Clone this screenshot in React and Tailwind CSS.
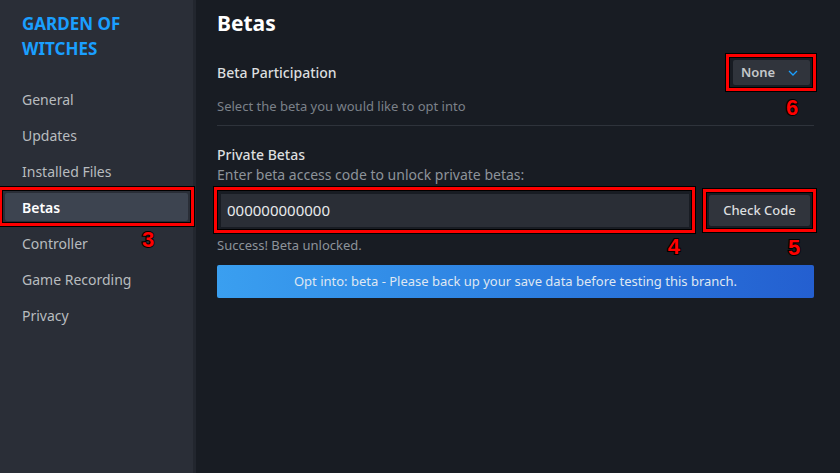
import React from 'react';

const navItems = ['General', 'Updates', 'Installed Files', 'Betas', 'Controller', 'Game Recording', 'Privacy'];

function Mark({ className }) {
  // red annotation frame with thin black outline inside and out
  return (
    <div
      className={`pointer-events-none absolute border-[3px] border-[#ff0000] shadow-[0_0_0_1px_#000,inset_0_0_0_1px_#000] ${className}`}
    />
  );
}

function Num({ children, className }) {
  return (
    <span
      className={`pointer-events-none absolute text-[22px] font-bold leading-none text-[#ff0000] [-webkit-text-stroke:2px_#000] [paint-order:stroke_fill] ${className}`}
      style={{ fontFamily: '"Liberation Sans", Arial, sans-serif' }}
    >
      {children}
    </span>
  );
}

export default function App() {
  return (
    <div
      className="flex h-[473px] w-[840px] overflow-hidden bg-[#181c23] text-[#dcdedf]"
      style={{ fontFamily: '"Noto Sans", "Open Sans", Arial, sans-serif' }}
    >
      {/* Sidebar */}
      <aside className="relative w-[196px] shrink-0 border-r-[3px] border-[#22262e] bg-[#2a2e37]">
        <h2 className="px-[22px] pt-[11px] text-[17px] font-bold leading-[25px] text-[#1a9fff]">
          GARDEN OF<br />WITCHES
        </h2>
        <nav className="mt-[20px] flex flex-col">
          {navItems.map((item) =>
            item === 'Betas' ? (
              <div key={item} className="relative mx-[5px] my-[4px] flex h-[28px] items-center rounded-[2px] bg-[#3d4450] px-[17px] text-[14px] font-semibold text-white">
                {item}
                <Mark className="-left-[6px] -right-[6px] -top-[6px] -bottom-[5px]" />
              </div>
            ) : (
              <div key={item} className="flex h-[36px] items-center px-[22px] text-[14px] text-[#b8bcbf]">
                {item}
              </div>
            )
          )}
        </nav>
        <Num className="left-[142px] top-[229px]">3</Num>
      </aside>

      {/* Main */}
      <main className="relative flex flex-1 flex-col pl-[21px] pr-[26px]">
        <h1 className="pt-[9px] text-[21px] font-bold leading-[28px] text-white">Betas</h1>

        <div className="mt-[23px] flex items-center justify-between">
          <div className="text-[14px] font-medium leading-[20px] text-[#dcdedf]">Beta Participation</div>
          <div className="relative mr-[4px] flex h-[25px] w-[77px] items-center justify-between rounded-[2px] bg-[#30343c] pl-[8px] pr-[12px] text-[13px] font-semibold text-[#c4c7ca]">
            None
            <svg width="10" height="6" viewBox="0 0 10 6" fill="none">
              <path d="M1 1l4 4 4-4" stroke="#1a9fff" strokeWidth="1.3" />
            </svg>
            <Mark className="-left-[7px] -right-[6px] -top-[6px] -bottom-[6px]" />
            <Num className="left-[53px] top-[37px]">6</Num>
          </div>
        </div>
        <div className="mt-[12px] text-[13px] leading-[18px] text-[#7b8189]">Select the beta you would like to opt into</div>
        <div className="mt-[10px] h-px bg-[#2e333b]" />

        <div className="mt-[19px] text-[14px] font-medium leading-[20px] text-[#dcdedf]">Private Betas</div>
        <div className="text-[14px] leading-[20px] text-[#8d939a]">Enter beta access code to unlock private betas:</div>

        <div className="mt-[9px] flex items-center gap-[20px]">
          <div className="relative ml-[4px] flex h-[33px] flex-1 items-center bg-[#2a2e36] px-[6px] text-[15px] text-[#e8eaec]">
            000000000000
            <Mark className="-left-[7px] -right-[6px] -top-[7px] -bottom-[6px]" />
            <Num className="right-[9px] top-[42px]">4</Num>
          </div>
          <div className="relative mr-[4px] flex h-[31px] w-[101px] items-center justify-center rounded-[2px] bg-[#30343c] text-[13px] font-medium text-[#dcdedf]">
            Check Code
            <Mark className="-left-[6px] -right-[6px] -top-[6px] -bottom-[6px]" />
            <Num className="left-[79px] top-[42px]">5</Num>
          </div>
        </div>

        <div className="mt-[9px] text-[13px] leading-[18px] text-[#8d939a]">Success! Beta unlocked.</div>

        <div className="mt-[11px] flex h-[33px] items-center justify-center rounded-[2px] bg-gradient-to-r from-[#3a9ff0] to-[#245fd0] text-[13px] text-[#dfe7f2]">
          Opt into: beta - Please back up your save data before testing this branch.
        </div>
      </main>
    </div>
  );
}
